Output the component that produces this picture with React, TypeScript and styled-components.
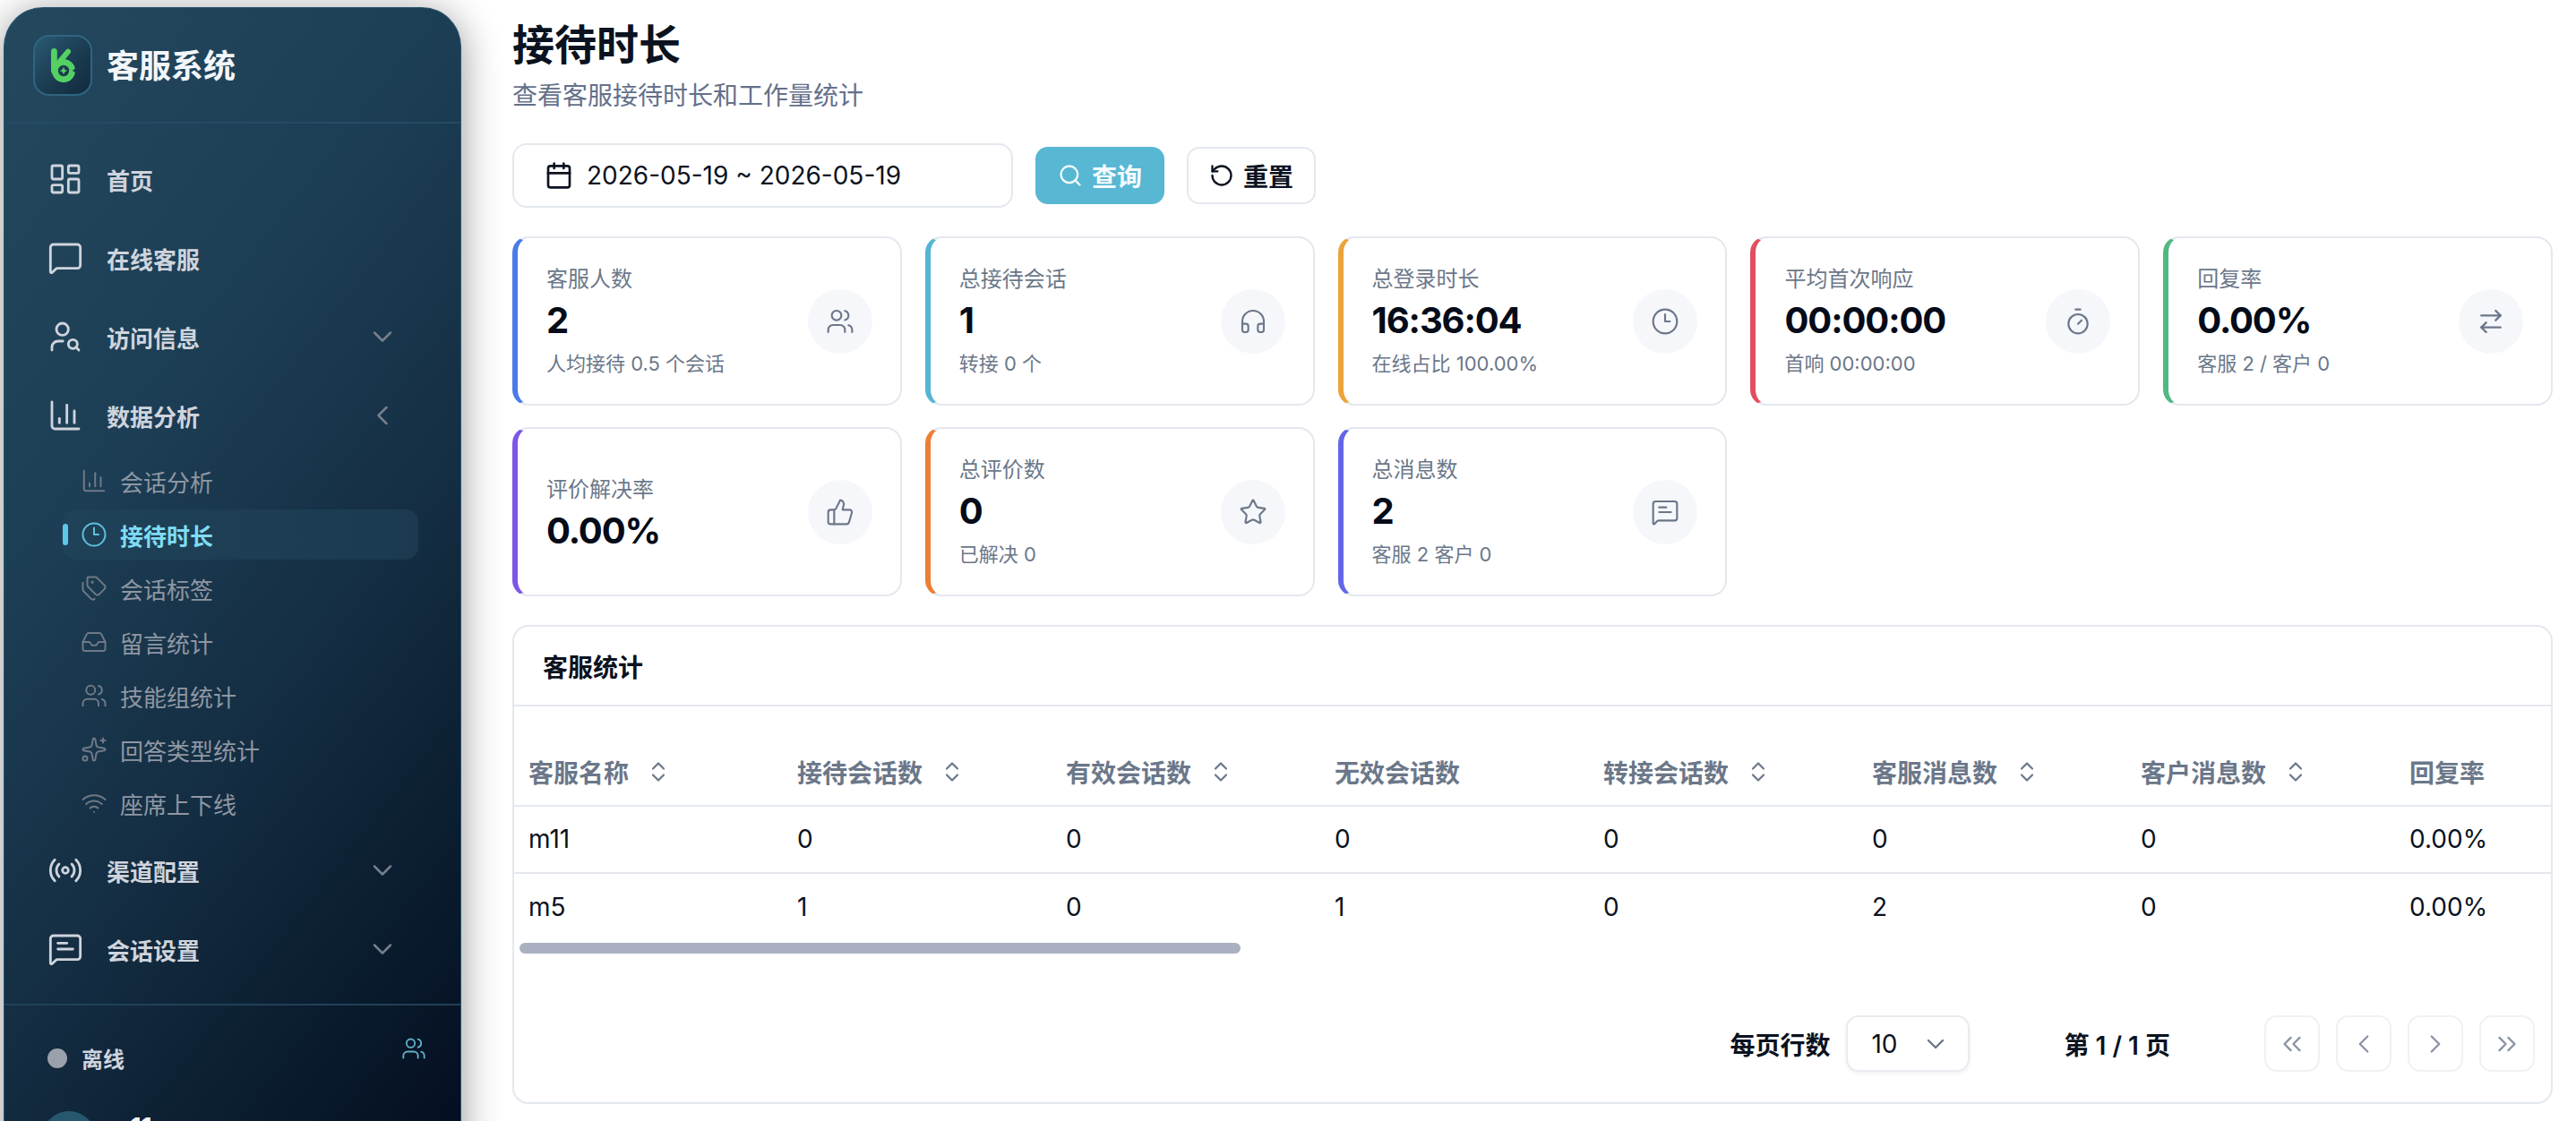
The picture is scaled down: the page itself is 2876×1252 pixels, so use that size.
import {ReactNode} from 'react';

import styled, {createGlobalStyle} from 'styled-components';
import {
  ArrowRightLeft,
  Calendar,
  ChartColumn,
  ChevronDown,
  ChevronLeft,
  ChevronRight,
  ChevronsLeft,
  ChevronsRight,
  Clock3,
  Headphones,
  Inbox,
  LayoutDashboard,
  MessageSquare,
  Radio,
  RotateCcw,
  Search,
  Sparkles,
  Star,
  Tags,
  ThumbsUp,
  Timer,
  UserSearch,
  Users,
  Wifi,
} from 'lucide-react';

const GlobalStyle = createGlobalStyle`
  html, body {
    margin: 0;
    padding: 0;
    height: 100%;
    overflow: hidden;
    background: #fff;
  }
  body {
    font-family: Inter, "Noto Sans CJK SC", "Noto Sans", sans-serif;
    color: #0b1220;
  }
  * {
    box-sizing: border-box;
  }
`;

const Page = styled.div`
  display: flex;
  align-items: flex-start;
  width: 2876px;
  height: 1252px;
  overflow: hidden;
`;

const Sidebar = styled.aside`
  flex: none;
  width: 511px;
  height: 1300px;
  margin: 8px 0 0 4px;
  border: 1px solid #2b566f;
  border-top-color: #24506a;
  border-radius: 44px 44px 0 0;
  background: linear-gradient(
    128deg,
    #24485e 0%,
    #1d3f56 32%,
    #142d42 60%,
    #0a1b2e 82%,
    #040c1e 100%
  );
  box-shadow: 0 6px 44px rgba(0, 0, 0, 0.42);
`;

const Brand = styled.div`
  display: flex;
  align-items: center;
  gap: 16px;
  height: 129px;
  padding-left: 32px;
  border-bottom: 2px solid #244c63;
`;

const LogoBox = styled.div`
  display: flex;
  align-items: center;
  justify-content: center;
  width: 66px;
  height: 68px;
  border: 2px solid #2f6580;
  border-radius: 18px;
  background: linear-gradient(135deg, #295a74 0%, #1b3b50 55%, #122a3d 100%);
`;

const BrandName = styled.div`
  padding-bottom: 3px;
  font-size: 36px;
  font-weight: 700;
  color: #f3f6f9;
`;

const Nav = styled.nav`
  padding: 18px 0 0;
`;

const NavRow = styled.div`
  display: flex;
  align-items: center;
  height: 88px;
  padding: 0 52px 0 48px;
  color: #cfd4dc;
  font-size: 26px;
  font-weight: 600;
`;

const NavIcon = styled.span`
  display: flex;
  align-items: center;
  justify-content: center;
  width: 40px;
  margin-right: 26px;
`;

const NavLabel = styled.span`
  flex: 1;
`;

const NavCaret = styled.span`
  display: flex;
  justify-content: center;
  width: 36px;
  margin-right: 17px;
  color: #767f8b;
`;

const SubList = styled.div`
  display: flex;
  flex-direction: column;
  margin-top: -1px;
  padding: 0 47px 1px 65px;
`;

const SubRow = styled.div<{$active?: boolean}>`
  position: relative;
  display: flex;
  align-items: center;
  gap: 14px;
  height: 60px;
  padding-left: 20px;
  border-radius: 14px;
  font-size: 26px;
  font-weight: ${({$active}) => ($active ? 700 : 400)};
  color: ${({$active}) => ($active ? '#7fdcf4' : '#8f97a3')};

  ${({$active}) =>
    $active &&
    `
    height: 56px;
    margin: 2px 0;
    background: linear-gradient(90deg, #1f4258, #1b3a4f);
    &::before {
      content: '';
      position: absolute;
      left: 0;
      top: 16px;
      width: 6px;
      height: 24px;
      border-radius: 3px;
      background: #5cc8e8;
    }
  `}

  svg {
    color: ${({$active}) => ($active ? '#5cc0db' : '#6f7986')};
  }
`;

const SideFooter = styled.div`
  margin-top: 17px;
  padding: 34px 38px 0 48px;
  border-top: 2px solid #1f4257;
`;

const StatusRow = styled.div`
  display: flex;
  align-items: flex-start;
`;

const StatusDot = styled.span`
  width: 22px;
  height: 22px;
  margin-top: 14px;
  border-radius: 50%;
  background: #9aa1ad;
`;

const StatusText = styled.span`
  flex: 1;
  margin-left: 16px;
  margin-top: 7px;
  font-size: 24px;
  font-weight: 600;
  color: #cfd4dc;
`;

const StatusIcon = styled.span`
  color: #5fb1c9;
  line-height: 0;
`;

const UserRow = styled.div`
  display: flex;
  align-items: flex-start;
  gap: 14px;
  margin-top: 42px;
  margin-left: -6px;
`;

const Avatar = styled.div`
  width: 60px;
  height: 60px;
  border-radius: 50%;
  background: #27566f;
`;

const UserName = styled.div`
  margin-top: 1px;
  font-size: 28px;
  font-weight: 700;
  color: #f3f6f9;
`;

const Main = styled.main`
  flex: 1;
  min-width: 0;
  padding: 17px 26px 0 57px;
`;

const Title = styled.h1`
  margin: 0;
  font-size: 47px;
  line-height: 66px;
  font-weight: 700;
  color: #0b1220;
`;

const Subtitle = styled.p`
  margin: 4px 0 0;
  font-size: 28px;
  line-height: 40px;
  color: #64708a;
`;

const Toolbar = styled.div`
  display: flex;
  align-items: center;
  gap: 25px;
  margin-top: 33px;
`;

const DateField = styled.div`
  display: flex;
  align-items: center;
  gap: 15px;
  width: 559px;
  height: 72px;
  padding-left: 34px;
  border: 2px solid #e4e8ef;
  border-radius: 16px;
  font-size: 28px;
  color: #0b1220;
`;

const Button = styled.button<{$primary?: boolean}>`
  display: flex;
  align-items: center;
  justify-content: center;
  gap: 10px;
  width: 144px;
  height: 64px;
  padding: 0;
  border: ${({$primary}) => ($primary ? 'none' : '2px solid #e4e8ef')};
  border-radius: 14px;
  background: ${({$primary}) => ($primary ? '#58b7d3' : '#fff')};
  color: ${({$primary}) => ($primary ? '#f4fbfd' : '#0b1220')};
  font: inherit;
  font-size: 28px;
  font-weight: 600;
`;

const CardGrid = styled.div`
  display: grid;
  grid-template-columns: repeat(5, 1fr);
  gap: 24px 26px;
  margin-top: 32px;
`;

const Card = styled.div<{$accent: string}>`
  display: flex;
  align-items: center;
  height: 189px;
  padding: 0 31px 0 32px;
  border: 2px solid #e4e8ef;
  border-left: 6px solid ${({$accent}) => $accent};
  border-radius: 18px;
  background: #fff;
`;

const CardBody = styled.div<{$noHint?: boolean}>`
  flex: 1;
  min-width: 0;
  padding-top: ${({$noHint}) => ($noHint ? '8px' : '0')};
`;

const CardLabel = styled.div`
  font-size: 24px;
  line-height: 34px;
  color: #6b7789;
`;

const CardValue = styled.div`
  margin-top: 1px;
  font-size: 40px;
  line-height: 56px;
  font-weight: 700;
  letter-spacing: -1.1px;
  color: #050b18;
`;

const CardHint = styled.div`
  margin-top: 4px;
  font-size: 22px;
  line-height: 32px;
  color: #6b7789;
`;

const CardIcon = styled.div`
  display: flex;
  flex: none;
  align-items: center;
  justify-content: center;
  width: 72px;
  height: 72px;
  border-radius: 50%;
  background: #f5f7fa;
  color: #6b7789;
`;

const TablePanel = styled.section`
  height: 535px;
  margin-top: 32px;
  overflow: hidden;
  border: 2px solid #e4e8ef;
  border-radius: 18px;
`;

const PanelHeader = styled.div`
  display: flex;
  align-items: center;
  height: 89px;
  padding-left: 32px;
  border-bottom: 2px solid #e4e8ef;
  font-size: 28px;
  font-weight: 600;
  color: #0b1220;
`;

const TableRow = styled.div<{$head?: boolean; $last?: boolean}>`
  display: grid;
  grid-template-columns: repeat(8, 300px);
  align-items: center;
  width: 2400px;
  height: ${({$head}) => ($head ? '112px' : '74.5px')};
  padding: ${({$head}) => ($head ? '36px 0 0 16px' : '0 0 0 16px')};
  border-bottom: ${({$last}) => ($last ? 'none' : '2px solid #e4e8ef')};
  font-size: 28px;
  font-weight: ${({$head}) => ($head ? 600 : 400)};
  color: ${({$head}) => ($head ? '#6b7789' : '#0b1220')};
`;

const Cell = styled.div`
  display: flex;
  align-items: center;
  gap: 24px;
`;

const SortIcon = styled.svg`
  flex: none;
  width: 18px;
  height: 24px;
`;

const ScrollTrack = styled.div`
  height: 12px;
  margin: 3px 0 0 6px;
`;

const ScrollThumb = styled.div`
  width: 805px;
  height: 12px;
  border-radius: 6px;
  background: #aab0bf;
`;

const Pager = styled.div`
  display: flex;
  align-items: center;
  justify-content: flex-end;
  height: 63px;
  margin-top: 69px;
  padding-right: 18px;
  font-size: 28px;
  font-weight: 600;
  color: #0b1220;
`;

const PageSelect = styled.div`
  display: flex;
  align-items: center;
  justify-content: space-between;
  width: 138px;
  height: 63px;
  margin: 0 105px 0 18px;
  padding: 0 20px 0 26px;
  border: 2px solid #e8ebf0;
  border-radius: 14px;
  box-shadow: 0 2px 4px rgba(15, 23, 42, 0.06);
  font-weight: 400;
  svg {
    color: #6b7789;
  }
`;

const PageButtons = styled.div`
  display: flex;
  gap: 18px;
  margin-left: 105px;
`;

const PageButton = styled.div`
  display: flex;
  align-items: center;
  justify-content: center;
  width: 62px;
  height: 63px;
  border: 2px solid #eff1f5;
  border-radius: 14px;
  color: #8a93a2;
`;

const Logo = () => (
  <svg width="27" height="38" viewBox="0 0 27 38">
    <g fill="none" stroke="#54d162" strokeLinecap="round">
      <path d="M3.4 3.4V25" strokeWidth="6.8" />
      <path d="M19 3.6 9.5 15" strokeWidth="6" />
      <circle cx="14" cy="25" r="9.6" strokeWidth="6.8" />
    </g>
    <path fill="#54d162" d="M14 20.4c.5 2.7 1.9 4.1 4.6 4.6-2.7.5-4.1 1.9-4.6 4.6-.5-2.7-1.9-4.1-4.6-4.6 2.7-.5 4.1-1.9 4.6-4.6z" />
    <path fill="#1d3f54" d="M27 22.4l-3.2 2.4 3.2 2.2z" />
  </svg>
);

// outline with two short lines, the package's own version has three
const MessageLines = ({size, strokeWidth}: {size: number; strokeWidth: number}) => (
  <svg width={size} height={size} viewBox="0 0 24 24" fill="none" stroke="currentColor" strokeWidth={strokeWidth} strokeLinecap="round" strokeLinejoin="round">
    <path d="M22 17a2 2 0 0 1-2 2H6.828a2 2 0 0 0-1.414.586l-2.202 2.202A.71.71 0 0 1 2 21.286V5a2 2 0 0 1 2-2h16a2 2 0 0 1 2 2z" />
    <path d="M13 8H7" />
    <path d="M17 12H7" />
  </svg>
);

const SortArrows = () => (
  <SortIcon viewBox="0 0 18 24" fill="none" stroke="currentColor" strokeWidth="2.2" strokeLinecap="round" strokeLinejoin="round">
    <path d="M3 8.500 9 2.500l6 6" />
    <path d="M3 15.500l6 6 6-6" />
  </SortIcon>
);

const navIcon = 42;
const navStroke = 1.7;
const subIcon = 30;
const subStroke = 1.6;

const subItems = [
  {label: '会话分析', icon: <ChartColumn size={subIcon} strokeWidth={subStroke} />},
  {label: '接待时长', icon: <Clock3 size={subIcon} strokeWidth={subStroke} />, active: true},
  {label: '会话标签', icon: <Tags size={subIcon} strokeWidth={subStroke} />},
  {label: '留言统计', icon: <Inbox size={subIcon} strokeWidth={subStroke} />},
  {label: '技能组统计', icon: <Users size={subIcon} strokeWidth={subStroke} />},
  {label: '回答类型统计', icon: <Sparkles size={subIcon} strokeWidth={subStroke} />},
  {label: '座席上下线', icon: <Wifi size={subIcon} strokeWidth={subStroke} />},
];

type Stat = {
  label: string;
  value: string;
  hint?: string;
  accent: string;
  icon: ReactNode;
};

const cardIcon = 32;

const stats: Stat[] = [
  {label: '客服人数', value: '2', hint: '人均接待 0.5 个会话', accent: '#4a7be8', icon: <Users size={cardIcon} strokeWidth={1.6} />},
  {label: '总接待会话', value: '1', hint: '转接 0 个', accent: '#54b5d2', icon: <Headphones size={cardIcon} strokeWidth={1.6} />},
  {label: '总登录时长', value: '16:36:04', hint: '在线占比 100.00%', accent: '#eba33a', icon: <Clock3 size={cardIcon} strokeWidth={1.6} />},
  {label: '平均首次响应', value: '00:00:00', hint: '首响 00:00:00', accent: '#e04f60', icon: <Timer size={cardIcon} strokeWidth={1.6} />},
  {label: '回复率', value: '0.00%', hint: '客服 2 / 客户 0', accent: '#52b883', icon: <ArrowRightLeft size={cardIcon} strokeWidth={1.8} />},
  {label: '评价解决率', value: '0.00%', accent: '#7c57e6', icon: <ThumbsUp size={cardIcon} strokeWidth={1.6} />},
  {label: '总评价数', value: '0', hint: '已解决 0', accent: '#ed7f35', icon: <Star size={cardIcon} strokeWidth={1.6} />},
  {label: '总消息数', value: '2', hint: '客服 2 客户 0', accent: '#6366e8', icon: <MessageLines size={cardIcon} strokeWidth={1.6} />},
];

const columns = [
  {label: '客服名称', sort: true},
  {label: '接待会话数', sort: true},
  {label: '有效会话数', sort: true},
  {label: '无效会话数'},
  {label: '转接会话数', sort: true},
  {label: '客服消息数', sort: true},
  {label: '客户消息数', sort: true},
  {label: '回复率'},
];

const rows = [
  ['m11', '0', '0', '0', '0', '0', '0', '0.00%'],
  ['m5', '1', '0', '1', '0', '2', '0', '0.00%'],
];

const App = () => (
  <Page>
    <GlobalStyle />
    <Sidebar>
      <Brand>
        <LogoBox>
          <Logo />
        </LogoBox>
        <BrandName>客服系统</BrandName>
      </Brand>
      <Nav>
        <NavRow>
          <NavIcon><LayoutDashboard size={navIcon} strokeWidth={navStroke} /></NavIcon>
          <NavLabel>首页</NavLabel>
        </NavRow>
        <NavRow>
          <NavIcon><MessageSquare size={navIcon} strokeWidth={navStroke} /></NavIcon>
          <NavLabel>在线客服</NavLabel>
        </NavRow>
        <NavRow>
          <NavIcon><UserSearch size={navIcon} strokeWidth={navStroke} /></NavIcon>
          <NavLabel>访问信息</NavLabel>
          <NavCaret><ChevronDown size={36} strokeWidth={1.7} /></NavCaret>
        </NavRow>
        <NavRow>
          <NavIcon><ChartColumn size={navIcon} strokeWidth={navStroke} /></NavIcon>
          <NavLabel>数据分析</NavLabel>
          <NavCaret><ChevronLeft size={36} strokeWidth={1.7} /></NavCaret>
        </NavRow>
        <SubList>
          {subItems.map((item) => (
            <SubRow key={item.label} $active={item.active}>
              {item.icon}
              {item.label}
            </SubRow>
          ))}
        </SubList>
        <NavRow>
          <NavIcon><Radio size={navIcon} strokeWidth={navStroke} /></NavIcon>
          <NavLabel>渠道配置</NavLabel>
          <NavCaret><ChevronDown size={36} strokeWidth={1.7} /></NavCaret>
        </NavRow>
        <NavRow>
          <NavIcon><MessageLines size={navIcon} strokeWidth={navStroke} /></NavIcon>
          <NavLabel>会话设置</NavLabel>
          <NavCaret><ChevronDown size={36} strokeWidth={1.7} /></NavCaret>
        </NavRow>
      </Nav>
      <SideFooter>
        <StatusRow>
          <StatusDot />
          <StatusText>离线</StatusText>
          <StatusIcon><Users size={28} strokeWidth={1.6} /></StatusIcon>
        </StatusRow>
        <UserRow>
          <Avatar />
          <UserName>m11</UserName>
        </UserRow>
      </SideFooter>
    </Sidebar>
    <Main>
      <Title>接待时长</Title>
      <Subtitle>查看客服接待时长和工作量统计</Subtitle>
      <Toolbar>
        <DateField>
          <Calendar size={32} strokeWidth={2} />
          2026-05-19 ~ 2026-05-19
        </DateField>
        <Button $primary>
          <Search size={28} strokeWidth={2} />
          查询
        </Button>
        <Button>
          <RotateCcw size={28} strokeWidth={2} />
          重置
        </Button>
      </Toolbar>
      <CardGrid>
        {stats.map((stat) => (
          <Card key={stat.label} $accent={stat.accent}>
            <CardBody $noHint={!stat.hint}>
              <CardLabel>{stat.label}</CardLabel>
              <CardValue>{stat.value}</CardValue>
              {stat.hint && <CardHint>{stat.hint}</CardHint>}
            </CardBody>
            <CardIcon>{stat.icon}</CardIcon>
          </Card>
        ))}
      </CardGrid>
      <TablePanel>
        <PanelHeader>客服统计</PanelHeader>
        <TableRow $head>
          {columns.map((column) => (
            <Cell key={column.label}>
              {column.label}
              {column.sort && <SortArrows />}
            </Cell>
          ))}
        </TableRow>
        {rows.map((row, rowIndex) => (
          <TableRow key={row[0]} $last={rowIndex === rows.length - 1}>
            {row.map((value, index) => (
              <Cell key={index}>{value}</Cell>
            ))}
          </TableRow>
        ))}
        <ScrollTrack>
          <ScrollThumb />
        </ScrollTrack>
        <Pager>
          每页行数
          <PageSelect>
            10
            <ChevronDown size={32} strokeWidth={1.8} />
          </PageSelect>
          第 1 / 1 页
          <PageButtons>
            <PageButton><ChevronsLeft size={34} strokeWidth={1.6} /></PageButton>
            <PageButton><ChevronLeft size={34} strokeWidth={1.6} /></PageButton>
            <PageButton><ChevronRight size={34} strokeWidth={1.6} /></PageButton>
            <PageButton><ChevronsRight size={34} strokeWidth={1.6} /></PageButton>
          </PageButtons>
        </Pager>
      </TablePanel>
    </Main>
  </Page>
);

export default App;
